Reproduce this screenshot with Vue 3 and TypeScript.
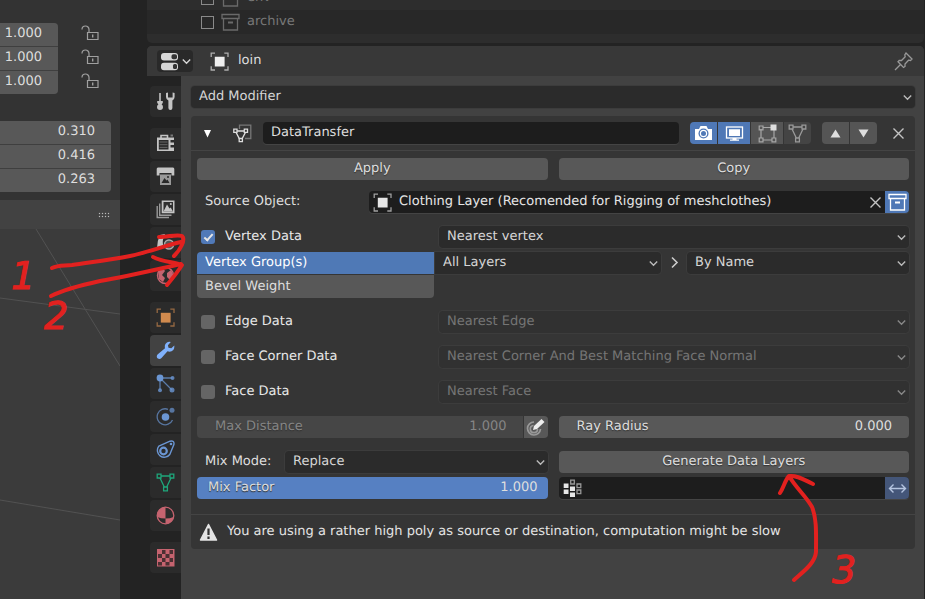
<script setup lang="ts">
import { ref } from 'vue'

interface Tab { icon: string; label: string; tone: string }
interface DataRow { id: string; label: string; mapping: string }

const scale = ref<string[]>(['1.000', '1.000', '1.000'])
const dimensions = ref<string[]>(['0.310', '0.416', '0.263'])

const tabGroups: Tab[][] = [
  [{ icon: 'tools', label: 'Tool', tone: 'white' }],
  [
    { icon: 'render', label: 'Render', tone: 'white' },
    { icon: 'printer', label: 'Output', tone: 'white' },
    { icon: 'layers', label: 'View Layer', tone: 'white' },
    { icon: 'scene', label: 'Scene', tone: 'white' },
    { icon: 'world', label: 'World', tone: 'pink' },
  ],
  [
    { icon: 'object', label: 'Object', tone: 'orange' },
    { icon: 'wrench', label: 'Modifiers', tone: 'bright' },
    { icon: 'particles', label: 'Particles', tone: 'blue' },
    { icon: 'physics', label: 'Physics', tone: 'blue' },
    { icon: 'constraint', label: 'Constraints', tone: 'blue' },
    { icon: 'mesh', label: 'Object Data', tone: 'green' },
    { icon: 'material', label: 'Material', tone: 'pink' },
  ],
  [{ icon: 'texture', label: 'Texture', tone: 'pink' }],
]
const activeTab = ref('wrench')

const outliner: string[] = ['env', 'archive']
const modifierName = ref('DataTransfer')
const source = ref('Clothing Layer (Recomended for Rigging of meshclothes)')
const vertexData = ref(true)
const maxDistance = ref('1.000')
const rayRadius = ref('0.000')
const mixFactor = ref('1.000')
const vertexGroup = ref('')

const dataRows: DataRow[] = [
  { id: 'edge', label: 'Edge Data', mapping: 'Nearest Edge' },
  { id: 'corner', label: 'Face Corner Data', mapping: 'Nearest Corner And Best Matching Face Normal' },
  { id: 'face', label: 'Face Data', mapping: 'Nearest Face' },
]
</script>

<template>
  <div class="app">
    <svg class="sprite" aria-hidden="true">
      <symbol id="i-tools" viewBox="0 0 19 19">
        <path d="M4 1V9" stroke="currentColor" stroke-width="1.6" />
        <path d="M1.2 9H6.8V11L5.6 12.2Q7 13.4 7 15Q7 18 4 18Q1 18 1 15Q1 13.4 2.4 12.2L1.2 11Z" fill="currentColor" />
        <path d="M10 1V5Q10 7.2 12.4 8.6V16A2 2 0 0 0 16.4 16V8.6Q18.6 7.2 18.6 5V1L16.6 .6V5.4H12V.6Z" fill="currentColor" />
      </symbol>
      <symbol id="i-render" viewBox="0 0 19 19">
        <path d="M5 4V1.500H11.500V4" fill="none" stroke="currentColor" stroke-width="1.600" />
        <path d="M1 3.500H18V17H1Z" fill="currentColor" />
        <path d="M2.800 6H12.500V15.500H2.800ZM14.500 6H18V8.500H14.500ZM14.500 11H18V13.500H14.500Z" fill="#2b2b2b" />
        <path d="M3.500 8H11.500M3.500 10.700H11.500M3.500 13.400H11.500" stroke="#666" />
        <path d="M14.500 .5H17V2.500H14.500Z" fill="#777" />
      </symbol>
      <symbol id="i-printer" viewBox="0 0 19 19">
        <path d="M2 .5H17Q18.300 .5 18.300 2V8.500H15.500V6H3.500V8.500H.7V2Q.7 .5 2 .5Z" fill="currentColor" />
        <path d="M4 7.500H15V18H4Z" fill="#999" />
        <path d="M5.500 16L8.500 11L10.500 13.500L11.500 12.500L13.500 16Z" fill="#292929" />
        <circle cx="12" cy="10" r="1" fill="#292929" />
      </symbol>
      <symbol id="i-layers" viewBox="0 0 19 19">
        <path d="M1.200 6V17.500H13M3.700 3.500V15.300H15.500" fill="none" stroke="#999" stroke-width="1.400" />
        <path d="M5.700 .5H18.500V13.300H5.700Z" fill="currentColor" />
        <path d="M7.500 2H17V11.500H7.500Z" fill="#303030" />
        <path d="M7.500 11.500L11 4.500L13.500 8.500L14.700 7.500L17 11.500Z" fill="currentColor" />
        <circle cx="14.800" cy="4" r="1" fill="currentColor" />
      </symbol>
      <symbol id="i-scene" viewBox="0 0 19 19">
        <path d="M4 2L9 1Q6 7 7 12L4.500 15H1Q1 8 4 2Z" fill="currentColor" />
        <path d="M13 1.500L17 5H12Z" fill="#aaa" />
        <circle cx="13" cy="11.500" r="4.500" fill="#555" stroke="#aaa" stroke-width="1.500" />
      </symbol>
      <symbol id="i-world" viewBox="0 0 19 19">
        <circle cx="9.500" cy="9.500" r="8" fill="none" stroke="currentColor" stroke-width="1.400" />
        <path d="M2 5L7 2L9 5L6 9L9 12L7 16L3 13ZM11 7L15 4L17.500 9L14 14L11 11Z" fill="currentColor" />
      </symbol>
      <symbol id="i-object" viewBox="0 0 19 19">
        <path d="M4.800 4.800H14.600V14.600H4.800Z" fill="currentColor" />
        <path d="M1.200 5V1.200H5M14.300 1.200H18V5M18 14.300V18H14.300M5 18H1.200V14.300" fill="none" stroke="currentColor" stroke-width="1.300" opacity=".65" />
      </symbol>
      <symbol id="i-wrench" viewBox="0 0 19 19">
        <path d="M13.500 .8Q10 1 9 4Q8.600 5.600 9 7.300L1.800 13.300Q-.1 15.200 1.500 17.200Q3.600 18.800 5.500 17L11.500 10.300Q15 11.400 17.300 9Q18.600 7.500 18.300 4.500L15.300 7.300L12.500 6.700L11.900 4.200L14.800 1Z" fill="currentColor" />
      </symbol>
      <symbol id="i-particles" viewBox="0 0 19 19">
        <path d="M4 4H16.500M4 4V16M4 4L16 16" stroke="currentColor" stroke-width="1.300" opacity=".75" />
        <circle cx="4" cy="4" r="3.400" fill="currentColor" />
        <g fill="currentColor" opacity=".8"><circle cx="16.500" cy="4" r="2" /><circle cx="4" cy="16.200" r="2" /><circle cx="16" cy="16" r="2.500" /></g>
      </symbol>
      <symbol id="i-physics" viewBox="0 0 19 19">
        <path d="M12 2.300A8 8 0 1 0 16.500 13" fill="none" stroke="currentColor" stroke-width="1.300" opacity=".7" />
        <circle cx="9.500" cy="10" r="3.800" fill="currentColor" />
        <circle cx="16" cy="3.300" r="2.500" fill="currentColor" opacity=".7" />
      </symbol>
      <symbol id="i-constraint" viewBox="0 0 19 19">
        <path d="M2.800 6.200L14 1.200Q18.600 .2 17.900 4.600L13.800 14.500A6.300 6.300 0 1 1 2.800 6.200Z" fill="none" stroke="currentColor" stroke-width="1.400" />
        <circle cx="7.500" cy="11" r="3.300" fill="none" stroke="currentColor" stroke-width="2.200" />
        <circle cx="15" cy="4" r="1.300" fill="currentColor" />
      </symbol>
      <symbol id="i-mesh" viewBox="0 0 19 19">
        <path d="M5 3H14M4 5L8.300 14M15 5L10.700 14" stroke="currentColor" stroke-width="1.300" />
        <path d="M1.200 1.200H5V5H1.200ZM14 1.200H17.800V5H14ZM7.600 14H11.400V17.800H7.600Z" fill="none" stroke="currentColor" stroke-width="1.300" />
      </symbol>
      <symbol id="i-material" viewBox="0 0 19 19">
        <circle cx="9.500" cy="9.500" r="8.300" fill="none" stroke="currentColor" stroke-width="1.300" />
        <path d="M9.500 1A8.500 8.500 0 0 0 1.200 11Q5 12.500 9.500 12.500ZM9.500 12.500Q14 12.500 17.600 11A8.500 8.500 0 0 1 9.500 18Z" fill="currentColor" />
      </symbol>
      <symbol id="i-texture" viewBox="0 0 19 19">
        <path d="M1 1H18.500V18.500H1Z" fill="currentColor" />
        <path d="M6 2h3.500v4h-3.500zM13.500 2h3.500v4h-3.500zM2 6h4v4h-4zM9.500 6h4v4h-4zM6 10h3.500v4h-3.500zM13.500 10h3.500v4h-3.500zM2 14h4v3.500h-4zM9.500 14h4v3.500h-4z" fill="#4b3033" />
      </symbol>
      <symbol id="i-archive" viewBox="0 0 19 19">
        <path d="M1 1.500H18V5.500H1ZM2.500 5.500V17H16.500V5.500" fill="none" stroke="currentColor" stroke-width="1.300" />
        <path d="M7 9.500H12" stroke="currentColor" stroke-width="2" />
      </symbol>
      <symbol id="i-lock" viewBox="0 0 19 19">
        <path d="M7.500 7.500H18V14.500H7.500ZM9 7.500V4.500A3.500 3.500 0 0 0 2 4.500" fill="none" stroke="currentColor" stroke-width="1.200" />
        <path d="M12.700 9.500V12.500" stroke="currentColor" stroke-width="1.400" />
      </symbol>
      <symbol id="i-editor" viewBox="0 0 19 19">
        <rect x="1" y="1" width="17" height="7.500" rx="3" fill="currentColor" />
        <rect x="11.500" y="2.300" width="5.500" height="5" rx="1.800" fill="#333" />
        <rect x="1" y="10.700" width="17" height="7.500" rx="3" fill="currentColor" />
        <rect x="13" y="12" width="4" height="5" rx="1.500" fill="#333" />
      </symbol>
      <symbol id="i-pin" viewBox="0 0 19 19">
        <path d="M12 1L18 7L16.500 8.500L14.500 8.200L11 12V14.500L9.500 15.500L4 9.800L5.200 8.500H7.500L11.200 4.800L10.800 2.800ZM6.500 12.500L1 18" fill="none" stroke="currentColor" stroke-width="1.300" />
      </symbol>
      <symbol id="i-transfer" viewBox="0 0 19 19">
        <path d="M6.500 5V1.200H17.800V14.500H12" fill="none" stroke="#777" stroke-width="1.300" />
        <path d="M3 7H12.500M2.600 7.500L6.500 15M12.900 7.500L9 15" stroke="currentColor" stroke-width="1.400" />
        <path d="M.8 5.200H4V8.400H.8ZM11.300 5.200H14.500V8.400H11.300ZM6.200 14.500H9.400V17.700H6.200Z" fill="#353535" stroke="currentColor" stroke-width="1.300" />
      </symbol>
      <symbol id="i-camera" viewBox="0 0 19 19">
        <path d="M1 5H5L6.500 2H12.500L14 5H18V16H1Z" fill="currentColor" />
        <circle cx="9.500" cy="9.500" r="5" fill="#4f78b6" />
        <circle cx="9.500" cy="9.500" r="3.100" fill="none" stroke="currentColor" stroke-width="1.200" />
      </symbol>
      <symbol id="i-screen" viewBox="0 0 19 19">
        <rect x="1.500" y="3" width="16" height="11" fill="none" stroke="currentColor" stroke-width="1.300" />
        <path d="M4 5.300H15V12H4ZM7.500 14H11.500V15.500H14V16.800H5V15.500H7.500Z" fill="currentColor" />
      </symbol>
      <symbol id="i-editmode" viewBox="0 0 19 19">
        <path d="M5 3.500H13M3 5V14M5 16H14M16 6V14M1.200 2H5V5.800H1.200ZM1.200 14H5V17.800H1.200ZM14 14H17.800V17.800H14Z" fill="none" stroke="currentColor" stroke-width="1.200" opacity=".6" />
        <path d="M12.500 .5H18.500V6.500H12.500Z" fill="currentColor" />
      </symbol>
      <symbol id="i-cross" viewBox="0 0 19 19"><path d="M4.500 4.500L14.500 14.500M14.500 4.500L4.500 14.500" stroke="currentColor" stroke-width="1.400" /></symbol>
      <symbol id="i-up" viewBox="0 0 19 19"><path d="M9.500 5.500L14.500 13.500H4.500Z" fill="currentColor" /></symbol>
      <symbol id="i-down" viewBox="0 0 19 19"><path d="M9.500 13.500L4.500 5.500H14.500Z" fill="currentColor" /></symbol>
      <symbol id="i-fold" viewBox="0 0 9 9"><path d="M4.500 8.500L1 1H8Z" fill="currentColor" /></symbol>
      <symbol id="i-caret" viewBox="0 0 9 9"><path d="M.8 2.600L4.500 6.200L8.200 2.600" fill="none" stroke="currentColor" stroke-width="1.400" /></symbol>
      <symbol id="i-next" viewBox="0 0 19 19"><path d="M7 4.500L12 9.500L7 14.500" fill="none" stroke="currentColor" stroke-width="1.600" /></symbol>
      <symbol id="i-swap" viewBox="0 0 19 19"><path d="M1.500 9.500H17.500M5.500 5.500L1.500 9.500L5.500 13.500M13.500 5.500L17.500 9.500L13.500 13.500" fill="none" stroke="currentColor" stroke-width="1.400" /></symbol>
      <symbol id="i-pen" viewBox="0 0 19 19">
        <path d="M8 4A6.500 6.500 0 1 0 14.500 11M7.500 7.500A3.600 3.600 0 1 0 11.500 11" fill="none" stroke="#999" stroke-width="1.700" />
        <path d="M15.500 1L18.500 4L11 11L7 12L8 8Z" fill="currentColor" />
      </symbol>
      <symbol id="i-group" viewBox="0 0 19 19">
        <path d="M.7 4.500H5.500V9H.7ZM.7 10.500H5.500V15H.7ZM7 7.500H12V12H7ZM7 13.500H12V18H7Z" fill="currentColor" />
        <path d="M7.700 1.200H11.300V5H7.700ZM14 5H17.800V8.700H14ZM14 11H17.800V14.700H14Z" fill="none" stroke="#999" stroke-width="1.300" />
      </symbol>
      <symbol id="i-warning" viewBox="0 0 19 19">
        <path d="M9.500 1.500L17.500 17H1.500Z" fill="currentColor" stroke="currentColor" stroke-width="1.500" stroke-linejoin="round" />
        <path d="M9.500 5.500V12M9.500 13.500V16" stroke="#333" stroke-width="2.200" />
      </symbol>
    </svg>

    <aside class="side">
      <section class="transform">
        <div class="scale-row">
          <div class="numbers scale">
            <input v-for="(_, i) in scale" :key="i" v-model="scale[i]" type="text" :aria-label="'Scale ' + 'XYZ'[i]" />
          </div>
          <div class="locks">
            <button v-for="n in 3" :key="n" type="button" aria-label="Lock scale"><svg class="icon"><use href="#i-lock" /></svg></button>
          </div>
        </div>
        <div class="numbers dims">
          <input v-for="(_, i) in dimensions" :key="i" v-model="dimensions[i]" type="text" :aria-label="'Dimension ' + 'XYZ'[i]" />
        </div>
      </section>
      <div class="grip-bar"><span class="grip"></span></div>
      <svg class="viewport" viewBox="0 229 120 370" preserveAspectRatio="xMinYMin slice" aria-hidden="true">
        <path d="M36 229L120 366M0 298L120 314M0 500L120 520" fill="none" stroke="#525252" />
      </svg>
    </aside>

    <main class="main">
      <section class="outliner">
        <div v-for="(item, i) in outliner" :key="item" class="outline-row" :class="{ alt: i % 2 === 1 }">
          <input :id="'ol-' + item" type="checkbox" class="hollow" />
          <svg class="icon"><use href="#i-archive" /></svg>
          <label :for="'ol-' + item">{{ item }}</label>
        </div>
      </section>

      <section class="properties">
        <header class="prop-head">
          <button type="button" class="editor" aria-label="Editor type">
            <svg class="icon"><use href="#i-editor" /></svg><svg class="caret"><use href="#i-caret" /></svg>
          </button>
          <svg class="icon crumb"><use href="#i-object" /></svg>
          <span class="object-name">loin</span>
          <button type="button" class="plain pin" aria-label="Pin"><svg class="icon"><use href="#i-pin" /></svg></button>
        </header>

        <div class="prop-body">
          <nav class="tabs">
            <div v-for="(group, g) in tabGroups" :key="g" class="tab-group">
              <button v-for="t in group" :key="t.icon" type="button" class="tab" :class="[t.tone, { active: activeTab === t.icon }]" :aria-label="t.label" @click="activeTab = t.icon">
                <svg class="icon"><use :href="'#i-' + t.icon" /></svg>
              </button>
            </div>
          </nav>

          <div class="content">
            <div class="select add">
              <select aria-label="Add Modifier"><option>Add Modifier</option></select>
              <svg class="caret"><use href="#i-caret" /></svg>
            </div>

            <article class="panel">
              <header class="panel-head">
                <button type="button" class="plain fold" aria-label="Collapse"><svg class="caret"><use href="#i-fold" /></svg></button>
                <svg class="icon"><use href="#i-transfer" /></svg>
                <input v-model="modifierName" class="name" type="text" aria-label="Modifier name" />
                <div class="joined">
                  <button type="button" class="on" aria-label="Render"><svg class="icon"><use href="#i-camera" /></svg></button>
                  <button type="button" class="on wide" aria-label="Viewport"><svg class="icon"><use href="#i-screen" /></svg></button>
                  <button type="button" class="wide" aria-label="Edit mode"><svg class="icon"><use href="#i-editmode" /></svg></button>
                  <button type="button" class="faint" aria-label="On cage"><svg class="icon"><use href="#i-mesh" /></svg></button>
                </div>
                <div class="joined">
                  <button type="button" aria-label="Move up"><svg class="icon"><use href="#i-up" /></svg></button>
                  <button type="button" aria-label="Move down"><svg class="icon"><use href="#i-down" /></svg></button>
                </div>
                <button type="button" class="plain remove" aria-label="Remove modifier"><svg class="icon"><use href="#i-cross" /></svg></button>
              </header>

              <div class="panel-body">
                <div class="stack loose">
                  <div class="halves">
                    <button type="button" class="btn">Apply</button>
                    <button type="button" class="btn">Copy</button>
                  </div>
                  <div class="source">
                    <label for="source">Source Object:</label>
                    <div class="dark">
                      <svg class="icon"><use href="#i-object" /></svg>
                      <input id="source" v-model="source" type="text" />
                      <button type="button" class="plain remove" aria-label="Clear"><svg class="icon"><use href="#i-cross" /></svg></button>
                      <button type="button" class="end on" aria-label="Object transform"><svg class="icon"><use href="#i-archive" /></svg></button>
                    </div>
                  </div>
                </div>

                <div class="stack">
                  <div class="data-row">
                    <span class="check"><input id="vertex" v-model="vertexData" type="checkbox" /><label for="vertex">Vertex Data</label></span>
                    <div class="select">
                      <select aria-label="Vertex mapping"><option>Nearest vertex</option></select>
                      <svg class="caret"><use href="#i-caret" /></svg>
                    </div>
                  </div>
                  <div class="layers">
                    <div class="choices">
                      <button type="button" class="chosen">Vertex Group(s)</button>
                      <button type="button">Bevel Weight</button>
                    </div>
                    <div class="select square">
                      <select aria-label="Source layers"><option>All Layers</option></select>
                      <svg class="caret"><use href="#i-caret" /></svg>
                    </div>
                    <svg class="icon next"><use href="#i-next" /></svg>
                    <div class="select">
                      <select aria-label="Destination matching"><option>By Name</option></select>
                      <svg class="caret"><use href="#i-caret" /></svg>
                    </div>
                  </div>
                </div>

                <div v-for="row in dataRows" :key="row.id" class="data-row">
                  <span class="check"><input :id="row.id" type="checkbox" /><label :for="row.id">{{ row.label }}</label></span>
                  <div class="select off">
                    <select disabled :aria-label="row.label + ' mapping'"><option>{{ row.mapping }}</option></select>
                    <svg class="caret"><use href="#i-caret" /></svg>
                  </div>
                </div>

                <div class="halves">
                  <div class="number off">
                    <label for="maxdist">Max Distance</label><input id="maxdist" v-model="maxDistance" type="text" disabled />
                    <button type="button" class="end" aria-label="Limit distance"><svg class="icon"><use href="#i-pen" /></svg></button>
                  </div>
                  <div class="number"><label for="ray">Ray Radius</label><input id="ray" v-model="rayRadius" type="text" /></div>
                </div>

                <div class="stack">
                  <div class="halves">
                    <div class="mix">
                      <label for="mixmode">Mix Mode:</label>
                      <div class="select">
                        <select id="mixmode"><option>Replace</option></select>
                        <svg class="caret"><use href="#i-caret" /></svg>
                      </div>
                    </div>
                    <button type="button" class="btn">Generate Data Layers</button>
                  </div>
                  <div class="halves">
                    <div class="number factor"><label for="factor">Mix Factor</label><input id="factor" v-model="mixFactor" type="text" /></div>
                    <div class="dark">
                      <svg class="icon"><use href="#i-group" /></svg>
                      <input v-model="vertexGroup" type="text" aria-label="Vertex group" />
                      <button type="button" class="end swap" aria-label="Invert"><svg class="icon"><use href="#i-swap" /></svg></button>
                    </div>
                  </div>
                </div>
              </div>

              <footer class="warning">
                <svg class="icon"><use href="#i-warning" /></svg>
                <span>You are using a rather high poly as source or destination, computation might be slow</span>
              </footer>
            </article>
          </div>
        </div>
      </section>
    </main>

    <!-- Red pen notes laid over the editor -->
    <svg class="ink" width="925" height="599" viewBox="0 0 925 599">
      <g fill="none" stroke="#e2211f" stroke-width="4" stroke-linecap="round" stroke-linejoin="round">
        <path d="M52 268C58 265 64 266 72 265C92 262 110 260 130 256C148 252 164 246 181 242M159 237C168 237 177 234 182 236C186 240 180 250 174 256" />
        <path d="M51 296C65 289 82 285 100 281C130 276 158 269 181 264M153 257C163 262 174 262 182 265C177 273 172 279 167 285" />
        <path d="M794 580C804 571 815 563 816 552C816 535 817 519 812 507C806 496 796 488 789 476M780 493C784 487 785 480 789 476C798 475 804 480 813 484" />
      </g>
      <g class="digits" fill="#e2211f">
        <text x="11" y="289">1</text>
        <text x="44" y="329">2</text>
        <text x="832" y="583">3</text>
      </g>
    </svg>
  </div>
</template>

<style>
html, body { background: #232323; }
</style>

<style scoped>
.app {
  position: relative;
  display: flex;
  gap: 27px;
  min-height: 100vh;
  padding-right: 1px;
  box-sizing: border-box;
  overflow: hidden;
  background: #232323;
  color: #dedede;
  font: 13px/22px "DejaVu Sans", sans-serif;
  text-rendering: geometricPrecision;
}
.app *, .app *::after { box-sizing: border-box; }
.sprite { position: absolute; width: 0; height: 0; }
.icon { width: 19px; height: 19px; flex: none; display: block; }
.caret { width: 9px; height: 9px; flex: none; display: block; }
button, input, select { font: inherit; color: inherit; text-rendering: inherit; border: 0; margin: 0; padding: 0; min-width: 0; outline: 0; }
button { display: flex; align-items: center; justify-content: center; cursor: pointer; }
input[type="text"] { background: transparent; height: 22px; width: 100%; }
.plain { background: none; width: 20px; height: 22px; }

/* left side */
.side { width: 120px; flex: none; display: flex; flex-direction: column; background: #3b3b3b; }
.transform { background: #333; padding: 23px 0 8px; }
.scale-row { display: flex; gap: 22px; margin-bottom: 27px; }
.numbers { display: grid; gap: 1px; grid-auto-rows: 23px; overflow: hidden; background: #3f3f3f; border-radius: 0 4px 4px 0; text-shadow: 0 1px 1px #222; }
.numbers input[type="text"] { background: #585858; text-align: right; padding: 0 16px 3px 0; height: 23px; }
.scale { width: 58px; }
.dims { width: 111px; }
.locks { display: grid; gap: 1px; grid-auto-rows: 23px; color: #a0a0a0; }
.locks button { background: none; }
.grip-bar { height: 29px; background: #424242; display: flex; align-items: center; justify-content: flex-end; padding-right: 10px; }
.grip { width: 12px; height: 6px; background: radial-gradient(circle, #bbb 20%, transparent 50%) 0 0 / 3px 3px; }
.viewport { flex: 1; width: 120px; min-height: 0; display: block; }

/* outliner */
.main { flex: 1; min-width: 0; display: flex; flex-direction: column; gap: 3px; }
.outliner { height: 43px; padding-bottom: 9px; overflow: hidden; display: flex; flex-direction: column; justify-content: flex-end; background: #2d2d2d; border-radius: 0 0 5px 5px; color: #777; }
.outline-row { height: 24px; flex: none; display: flex; align-items: center; gap: 7px; padding-left: 54px; }
.outline-row .icon { color: #6a6a6a; }
.alt { background: #282828; }
input[type="checkbox"] { appearance: none; width: 14px; height: 14px; flex: none; display: grid; place-content: center; border-radius: 3px; background: #656565; }
input[type="checkbox"].hollow { width: 13px; height: 13px; background: none; border: 1px solid #8a8a8a; border-radius: 0; }
input[type="checkbox"]:checked { background: #5079b8; }
input[type="checkbox"]:checked::after { content: ""; width: 5px; height: 9px; margin-bottom: 2px; border: solid #e6e6e6; border-width: 0 2px 2px 0; transform: rotate(42deg); }

/* properties editor */
.properties { flex: 1; display: flex; flex-direction: column; background: #424242; border-radius: 5px 5px 0 0; overflow: hidden; }
.prop-head { height: 30px; background: #383838; display: flex; align-items: center; gap: 9px; padding: 0 11px 0 10px; }
.editor { width: 36px; height: 22px; gap: 3px; background: #292929; border-radius: 4px; color: #d6d6d6; }
.crumb { margin-left: 8px; color: #eee; }
.pin { margin-left: auto; color: #999; }
.prop-body { flex: 1; display: flex; }
.tabs { width: 34px; flex: none; background: #232323; padding: 10px 0 10px 3px; display: flex; flex-direction: column; gap: 11px; }
.tab-group { display: flex; flex-direction: column; gap: 2px; }
.tab { width: 31px; height: 31px; background: #2b2b2b; border-radius: 4px 0 0 4px; }
.active { background: #424242; }
.white { color: #c4c4c4; }
.pink { color: #c5636f; }
.orange { color: #d08a4e; }
.bright { color: #80b1fb; }
.blue { color: #6b96d3; }
.green { color: #1fa67b; }

.content { flex: 1; min-width: 0; padding: 10px 9px 10px 10px; display: flex; flex-direction: column; gap: 8px; }
.panel { background: #353535; border-radius: 4px; }
.panel-head { height: 35px; display: flex; align-items: center; gap: 11px; padding: 0 7px; border-bottom: 1px solid #444; }
.fold { width: 24px; justify-content: flex-start; padding-left: 5px; color: #fff; }
.panel-head .name { flex: 1; width: 0; background: #1d1d1d; border-radius: 4px; padding: 0 8px; box-shadow: 0 1px #444; }
.joined { display: flex; gap: 1px; border-radius: 4px; overflow: hidden; }
.joined button { width: 27px; height: 22px; background: #555; }
.joined .wide { width: 32px; }
.joined .on, .end.on { background: #4f78b6; color: #fff; }
.joined .faint { background: #444; color: #999; }
.remove { color: #c4c4c4; }

.panel-body { padding: 7px 6px 15px; display: flex; flex-direction: column; gap: 13px; }
.stack { display: flex; flex-direction: column; gap: 4px; }
.loose { gap: 11px; }
.halves { display: grid; grid-template-columns: 1fr 1fr; gap: 11px; }
.btn { height: 22px; background: #585858; border-radius: 4px; text-shadow: 0 1px 1px #333; }
.source { display: grid; grid-template-columns: 172px 1fr; }
.source label, .mix label { padding-left: 8px; }
.dark { display: flex; align-items: center; height: 22px; padding-left: 4px; background: #1d1d1d; border-radius: 4px; overflow: hidden; box-shadow: 0 1px #444; color: #e6e6e6; }
.dark input { flex: 1; padding-left: 7px; }
.end { width: 24px; height: 22px; flex: none; }
.swap { background: #445679; color: #b4c4e0; }
.data-row { display: grid; grid-template-columns: 34% 1fr; }
.check { display: flex; align-items: center; gap: 10px; padding-left: 4px; color: #e8e8e8; }
.select { display: grid; align-items: center; height: 22px; }
.select select { grid-area: 1 / 1; appearance: none; width: 100%; height: 22px; padding: 0 20px 0 8px; background: #2b2b2b; border-radius: 4px; box-shadow: 0 0 0 1px #3c3c3c; color: #d6d6d6; opacity: 1; }
.select .caret { grid-area: 1 / 1; justify-self: end; margin-right: 3px; color: #bbb; pointer-events: none; }
.select.off select { background: #313131; color: #757575; }
.select.off .caret { color: #888; }
.select.square select { border-radius: 0 4px 4px 0; }
.layers { display: grid; grid-template-columns: 238px 1fr 26px 222px; }
.choices { display: grid; gap: 1px; padding-right: 1px; grid-template-rows: 22px 23px; text-shadow: 0 1px 1px #333; }
.choices button { justify-content: flex-start; padding-left: 8px; background: #585858; border-radius: 0 0 4px 4px; }
.choices .chosen { background: #4f79b6; border-radius: 4px 0 0 0; color: #fff; }
.next { margin: 1px 4px; color: #ccc; }
.number { display: flex; align-items: center; height: 22px; background: #585858; border-radius: 4px; padding: 0 17px 0 18px; overflow: hidden; text-shadow: 0 1px 1px #333; }
.number label { white-space: nowrap; }
.number input { flex: 1; text-align: right; }
.number.off { background: #464646; color: #858585; padding-right: 0; }
.number.off input { padding-right: 17px; }
.number .end { background: #585858; color: #eee; box-shadow: -1px 0 #353535; }
.factor { background: #5680c2; padding: 0 10px 0 11px; }
.mix { display: grid; grid-template-columns: 88px 1fr; }
.warning { height: 35px; display: flex; align-items: center; gap: 9px; padding-left: 8px; border-top: 1px solid #444; color: #e4e4e4; }

.ink { position: absolute; left: 0; top: 0; pointer-events: none; }
.digits { font: italic 38px "DejaVu Sans", sans-serif; stroke: #e2211f; stroke-width: 1px; }
</style>
